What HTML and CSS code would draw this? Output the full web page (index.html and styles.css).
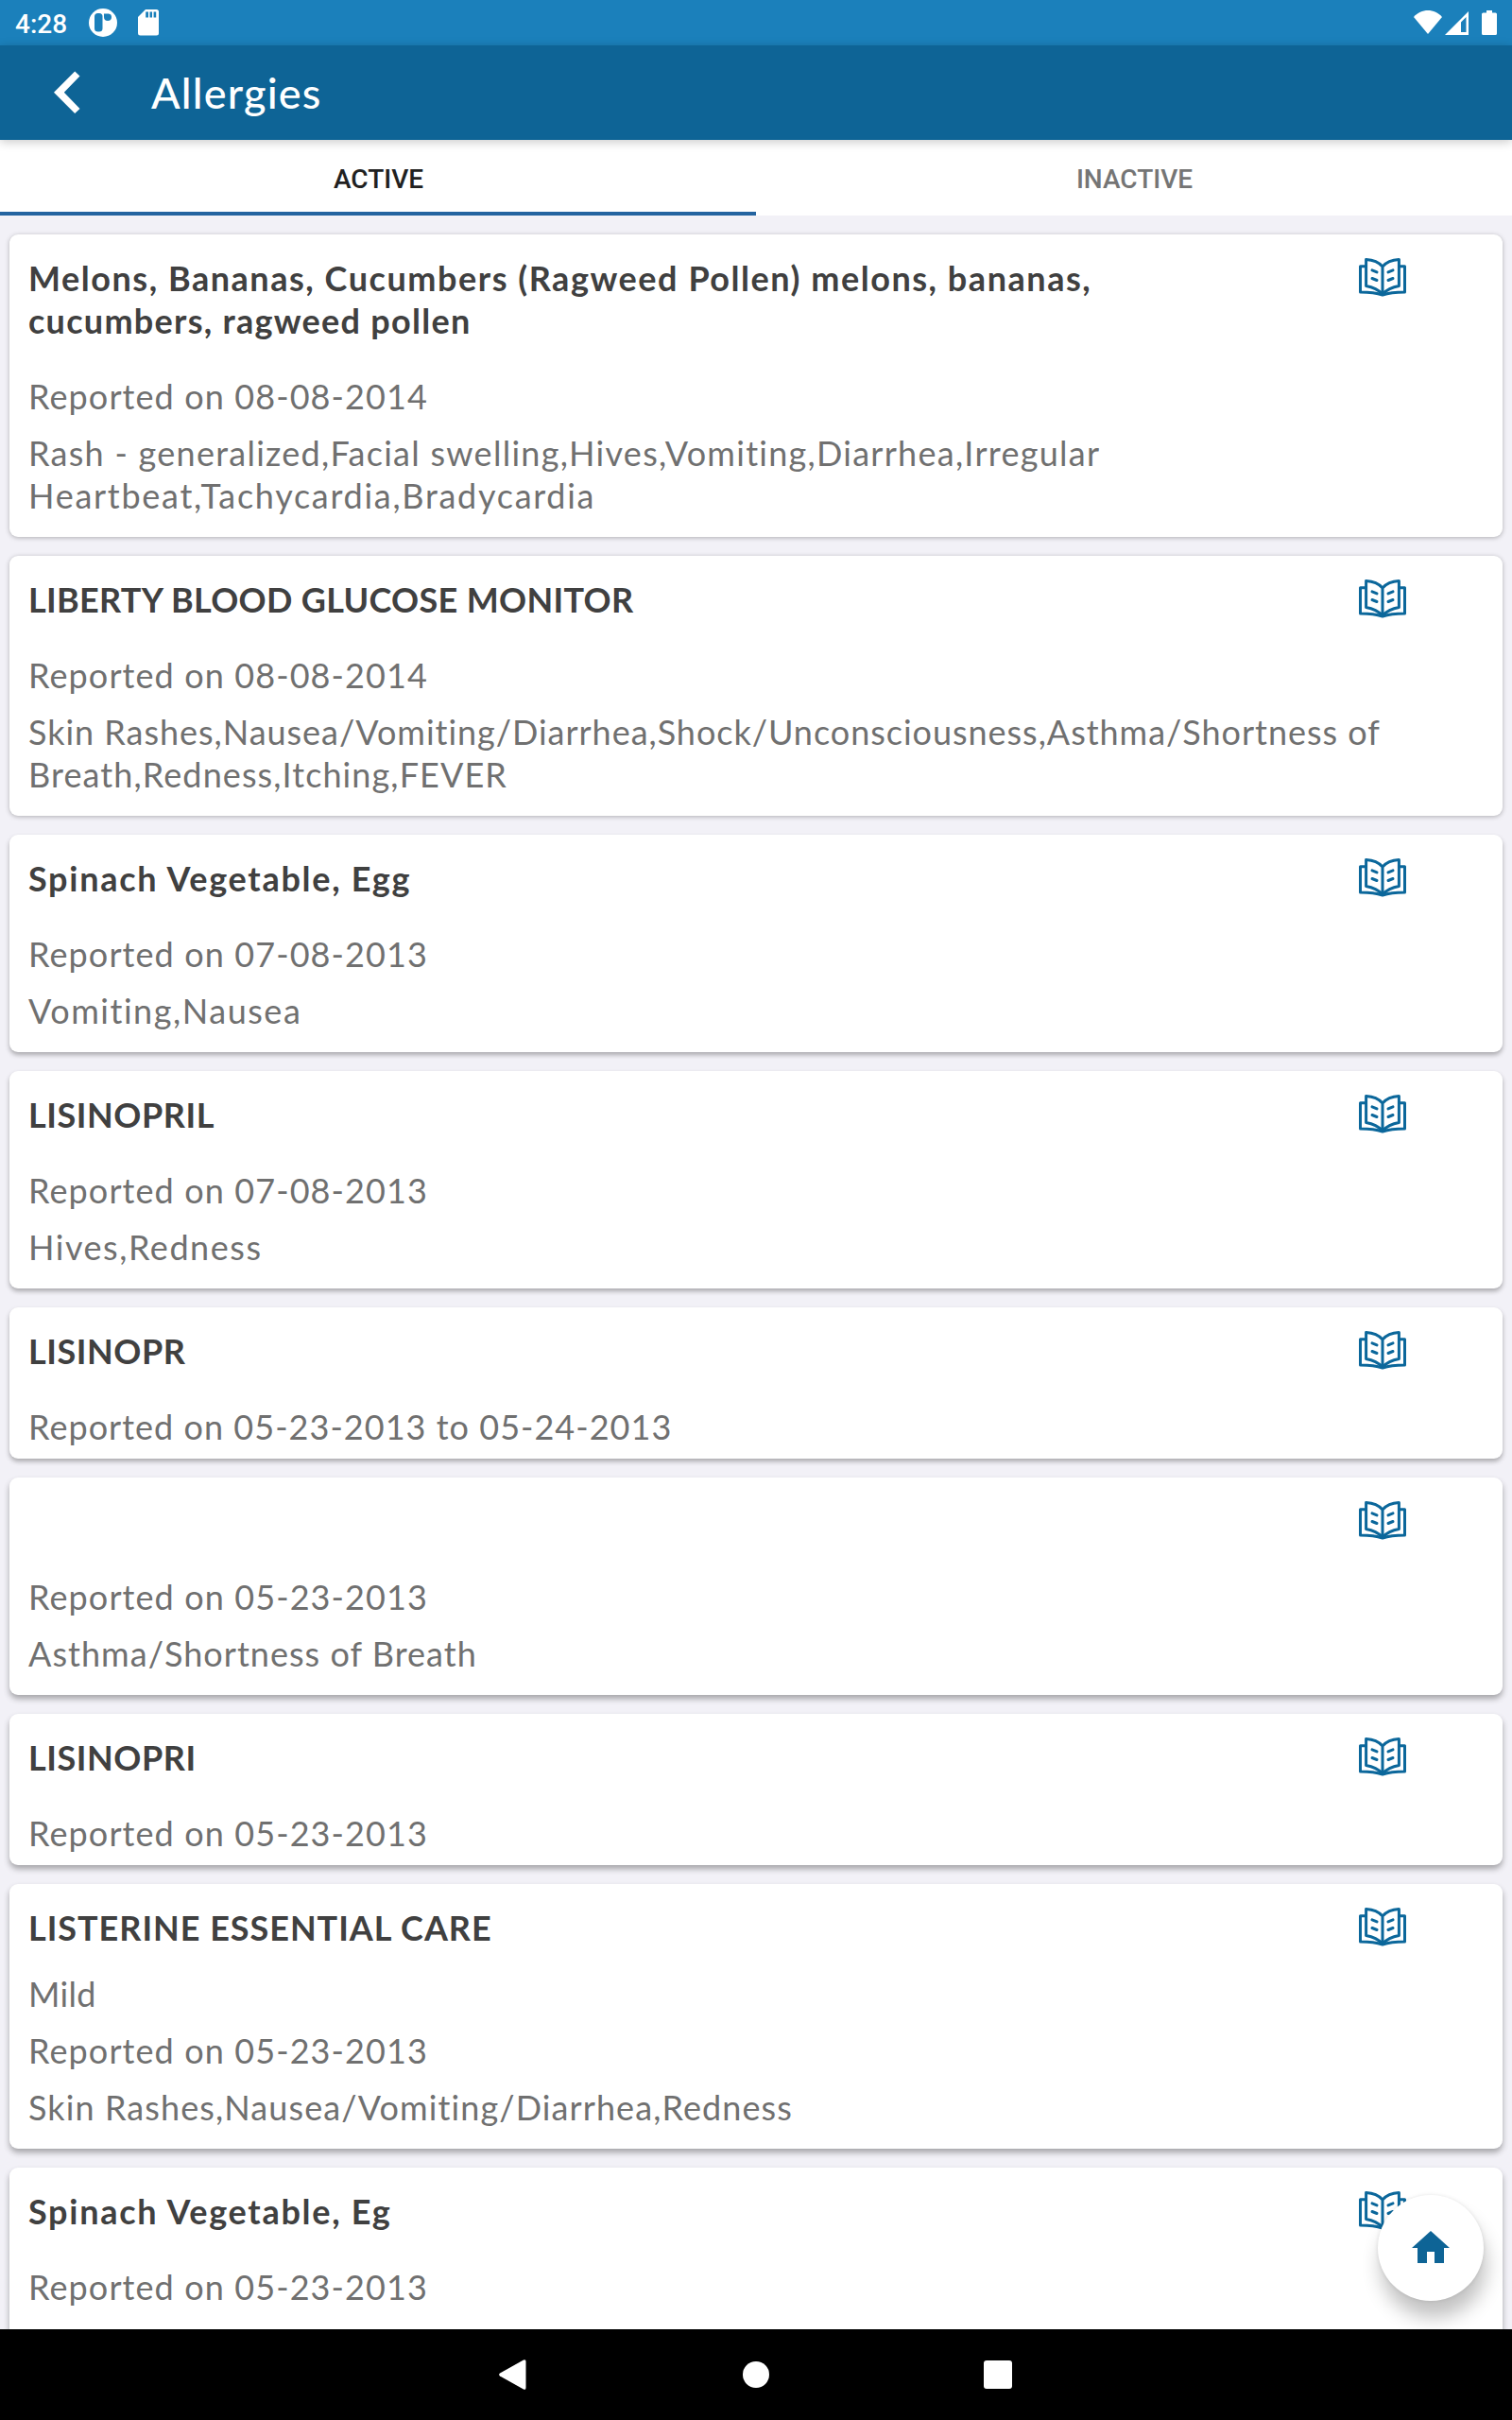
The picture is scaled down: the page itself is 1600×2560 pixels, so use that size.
FILE: index.html
```html
<!DOCTYPE html>
<html lang="en">
<head>
    <meta charset="UTF-8">
    <meta name="viewport" content="width=device-width, initial-scale=1.0">
    <title>Allergies</title>
    <link rel="stylesheet" href="styles.css">
</head>
<body>
    <!-- shared icon -->
    <svg class="sprite" width="0" height="0">
        <symbol id="book" viewBox="0 0 50 41">
            <g fill="none" stroke="#0b679b" stroke-width="3" stroke-linecap="round" stroke-linejoin="round">
                <path d="M25 9C21 4.5 14 2 7.6 1.6V29.6C14 30.6 20.5 33.4 25 38.4C29.500 33.400 36 30.600 42.400 29.600V1.600C36 2 29 4.500 25 9V38"/>
                <path d="M7 8.800H1.500V36C10 36 18 36.600 25 39C32 36.600 40 36 48.500 36V8.800H43"/>
                <path d="M14 12.900L19 14.900M14 21.500L19 23.500M36 12.900L31 14.900M36 21.500L31 23.500"/>
            </g>
        </symbol>
    </svg>

    <div class="status-bar">
        <span class="time">4:28</span>
        <svg class="notif" width="30" height="30" viewBox="0 0 30 30">
            <circle cx="15" cy="15" r="15" fill="#fff"/>
            <rect x="6" y="5" width="8.500" height="19.500" rx="3.500" fill="#1b80bb"/>
            <path d="M16 5.500H21A3.500 3.500 0 0 1 24 9A4 4 0 0 1 16 9Z" fill="#1b80bb"/>
        </svg>
        <svg class="sd" width="22" height="28" viewBox="0 0 22 28">
            <path d="M8 0H19.500A2.500 2.500 0 0 1 22 2.500V25A2.500 2.500 0 0 1 19.500 27.500H2.500A2.500 2.500 0 0 1 0 25V8Z" fill="#fff"/>
            <path d="M8.200 2.500H11V8.500H8.200ZM12.500 2.500H15V8.500H12.500ZM16.600 2.500H19.200V8.500H16.600Z" fill="#1b80bb"/>
        </svg>
        <div class="status-right">
            <svg width="30" height="25" viewBox="0 0 30 25"><path d="M0 7C8-2.300 22-2.300 30 7L15 25Z" fill="#fff"/></svg>
            <svg class="signal" width="25" height="25" viewBox="0 0 25 25"><path d="M25 0V25H0ZM22.500 6L17 11.500V22H22.500Z" fill="#fff" fill-rule="evenodd"/></svg>
            <svg class="battery" width="16" height="26" viewBox="0 0 16 26"><path d="M5 0H11V2.500H14.500A1.500 1.500 0 0 1 16 4V24.500A1.500 1.500 0 0 1 14.500 26H1.500A1.500 1.500 0 0 1 0 24.500V4A1.500 1.500 0 0 1 1.500 2.500H5Z" fill="#fff"/></svg>
        </div>
    </div>

    <div class="app-bar">
        <svg class="back" width="28" height="46" viewBox="0 0 28 46"><path d="M22.200 .5L27.500 5.500L10.800 22.700L27.500 40L22.200 45L0 22.700Z" fill="#fff"/></svg>
        <h1>Allergies</h1>
    </div>

    <div class="tabs">
        <div class="tab active">ACTIVE</div>
        <div class="tab">INACTIVE</div>
    </div>

    <div class="list">
        <div class="card">
            <div class="card-head">
                <h2><span class="line ls-15">Melons, Bananas, Cucumbers (Ragweed Pollen) melons, bananas,</span> <span class="line ls-12">cucumbers, ragweed pollen</span></h2>
                <svg class="book"><use href="#book"/></svg>
            </div>
            <p class="reported">Reported on 08-08-2014</p>
            <p class="reaction"><span class="line ls-12">Rash - generalized,Facial swelling,Hives,Vomiting,Diarrhea,Irregular</span> <span class="line ls-17">Heartbeat,Tachycardia,Bradycardia</span></p>
        </div>
        <div class="card">
            <div class="card-head">
                <h2 class="ls-3">LIBERTY BLOOD GLUCOSE MONITOR</h2>
                <svg class="book"><use href="#book"/></svg>
            </div>
            <p class="reported">Reported on 08-08-2014</p>
            <p class="reaction"><span class="line ls-9">Skin Rashes,Nausea/Vomiting/Diarrhea,Shock/Unconsciousness,Asthma/Shortness of</span> <span class="line">Breath,Redness,Itching,FEVER</span></p>
        </div>
        <div class="card">
            <div class="card-head">
                <h2 class="ls-17">Spinach Vegetable, Egg</h2>
                <svg class="book"><use href="#book"/></svg>
            </div>
            <p class="reported">Reported on 07-08-2013</p>
            <p class="reaction ls-15">Vomiting,Nausea</p>
        </div>
        <div class="card">
            <div class="card-head">
                <h2 class="ls-6">LISINOPRIL</h2>
                <svg class="book"><use href="#book"/></svg>
            </div>
            <p class="reported">Reported on 07-08-2013</p>
            <p class="reaction ls-15">Hives,Redness</p>
        </div>
        <div class="card short">
            <div class="card-head">
                <h2 class="ls-6">LISINOPR</h2>
                <svg class="book"><use href="#book"/></svg>
            </div>
            <p class="reported ls-10">Reported on 05-23-2013 to 05-24-2013</p>
        </div>
        <div class="card">
            <div class="card-head">
                <h2></h2>
                <svg class="book"><use href="#book"/></svg>
            </div>
            <p class="reported">Reported on 05-23-2013</p>
            <p class="reaction ls-10">Asthma/Shortness of Breath</p>
        </div>
        <div class="card short">
            <div class="card-head">
                <h2 class="ls-6">LISINOPRI</h2>
                <svg class="book"><use href="#book"/></svg>
            </div>
            <p class="reported">Reported on 05-23-2013</p>
        </div>
        <div class="card">
            <div class="card-head">
                <h2 class="ls-9">LISTERINE ESSENTIAL CARE</h2>
                <svg class="book"><use href="#book"/></svg>
            </div>
            <p class="severity ls-3">Mild</p>
            <p class="reported">Reported on 05-23-2013</p>
            <p class="reaction">Skin Rashes,Nausea/Vomiting/Diarrhea,Redness</p>
        </div>
        <div class="card last">
            <div class="card-head">
                <h2 class="ls-17">Spinach Vegetable, Eg</h2>
                <svg class="book"><use href="#book"/></svg>
            </div>
            <p class="reported">Reported on 05-23-2013</p>
        </div>
    </div>

    <div class="fab">
        <svg width="40" height="34" viewBox="0 0 40 34"><path d="M20 0L40 18H34V34H24V22H16V34H6V18H0Z" fill="#0e6496"/></svg>
    </div>

    <div class="nav-bar">
        <div class="nav-btn back-btn"><svg width="29" height="32" viewBox="0 0 29 32"><path d="M1 14.500L26 .4Q28.500-.5 28.500 2V30Q28.500 32.500 26 31.600L1 17.500Q-.8 16 1 14.500Z" fill="#fff"/></svg></div>
        <div class="nav-btn"><svg width="28" height="28" viewBox="0 0 28 28"><circle cx="14" cy="14" r="14" fill="#fff"/></svg></div>
        <div class="nav-btn"><svg width="30" height="30" viewBox="0 0 30 30"><rect width="30" height="30" rx="3" fill="#fff"/></svg></div>
    </div>
</body>
</html>
```
FILE: styles.css
```css
* {
    margin: 0;
    padding: 0;
    box-sizing: border-box;
}

body {
    width: 1600px;
    height: 2560px;
    display: flex;
    flex-direction: column;
    overflow: hidden;
    position: relative;
    background: #f2f1f7;
    font-family: Lato, "Open Sans", sans-serif;
}

svg {
    display: block;
    flex-shrink: 0;
}

.sprite {
    position: absolute;
}

/* status bar */
.status-bar {
    height: 48px;
    flex-shrink: 0;
    display: flex;
    align-items: center;
    padding: 0 16px;
    background: #1b80bb;
    color: #fff;
}

.time {
    font: 500 28px/48px Roboto, sans-serif;
    padding-top: 3px;
    width: 78px;
}

.sd {
    margin-left: 22px;
}

.status-right {
    display: flex;
    margin-left: auto;
}

.signal {
    margin-left: 3px;
    margin-top: 1px;
}

.battery {
    margin-left: 14px;
}

/* title bar */
.app-bar {
    height: 100px;
    flex-shrink: 0;
    display: flex;
    align-items: center;
    padding-left: 57px;
    background: #0e6496;
    box-shadow: 0 2px 10px rgba(0, 0, 0, 0.22);
    position: relative;
    z-index: 1;
}

.app-bar h1 {
    margin-left: 75px;
    color: #fff;
    font-size: 45px;
    font-weight: 500;
    letter-spacing: 1.2px;
}

/* tabs */
.tabs {
    height: 80px;
    flex-shrink: 0;
    display: flex;
    background: #fff;
}

.tab {
    flex: 1;
    border-bottom: 4px solid transparent;
    padding-left: 1px;
    color: #757575;
    font: 500 28px/84px Roboto, sans-serif;
    text-align: center;
}

.tab.active {
    color: #212121;
    border-bottom-color: #2464a0;
}

/* allergy list */
.list {
    flex: 1;
    min-height: 0;
    overflow: hidden;
    display: flex;
    flex-direction: column;
    gap: 20px;
    padding: 20px 10px 0;
}

.card {
    flex-shrink: 0;
    padding: 24px 20px 21px;
    background: #fff;
    border-radius: 9px;
    box-shadow: 0 1px 5px rgba(0, 0, 0, 0.28);
    color: #707070;
    font-size: 36px;
    line-height: 45px;
    letter-spacing: 1.1px;
}

.card:nth-child(n+3) {
    box-shadow: 0 3px 5px rgba(0, 0, 0, 0.3);
}

.card:nth-child(n+6) {
    box-shadow: 0 4px 6px rgba(0, 0, 0, 0.32);
}

.card.short {
    padding-bottom: 11px;
}

/* runs on under the navigation bar */
.card.last {
    padding-bottom: 40px;
}

.card-head {
    display: flex;
    justify-content: space-between;
    align-items: flex-start;
    padding-right: 82px;
}

.card h2 {
    min-height: 45px;
    color: #404040;
    font-size: 36px;
    font-weight: 700;
}

.line {
    display: block;
    white-space: nowrap;
}

.book {
    width: 50px;
    height: 41px;
    margin-top: 1px;
}

.severity {
    margin-top: 25px;
}

.reported {
    margin-top: 35px;
}

.severity + .reported,
.reaction {
    margin-top: 15px;
}

/* letter spacing steps */
.ls-3 { letter-spacing: 0.32px; }
.ls-6 { letter-spacing: 0.55px; }
.ls-9 { letter-spacing: 0.97px; }
.ls-10 { letter-spacing: 1.03px; }
.ls-12 { letter-spacing: 1.27px; }
.ls-15 { letter-spacing: 1.54px; }
.ls-17 { letter-spacing: 1.72px; }

/* home button */
.fab {
    position: absolute;
    right: 30px;
    bottom: 126px;
    width: 112px;
    height: 112px;
    padding-bottom: 2px;
    border-radius: 50%;
    background: #fff;
    box-shadow: 3px 18px 20px rgba(0, 0, 0, 0.24), 0 0 4px rgba(0, 0, 0, 0.1);
    display: flex;
    align-items: center;
    justify-content: center;
}

/* system navigation */
.nav-bar {
    height: 96px;
    flex-shrink: 0;
    display: flex;
    justify-content: center;
    align-items: center;
    background: #000;
    position: relative;
}

.nav-btn {
    width: 256px;
    display: flex;
    justify-content: center;
}

.back-btn {
    padding-right: 4px;
}
```
